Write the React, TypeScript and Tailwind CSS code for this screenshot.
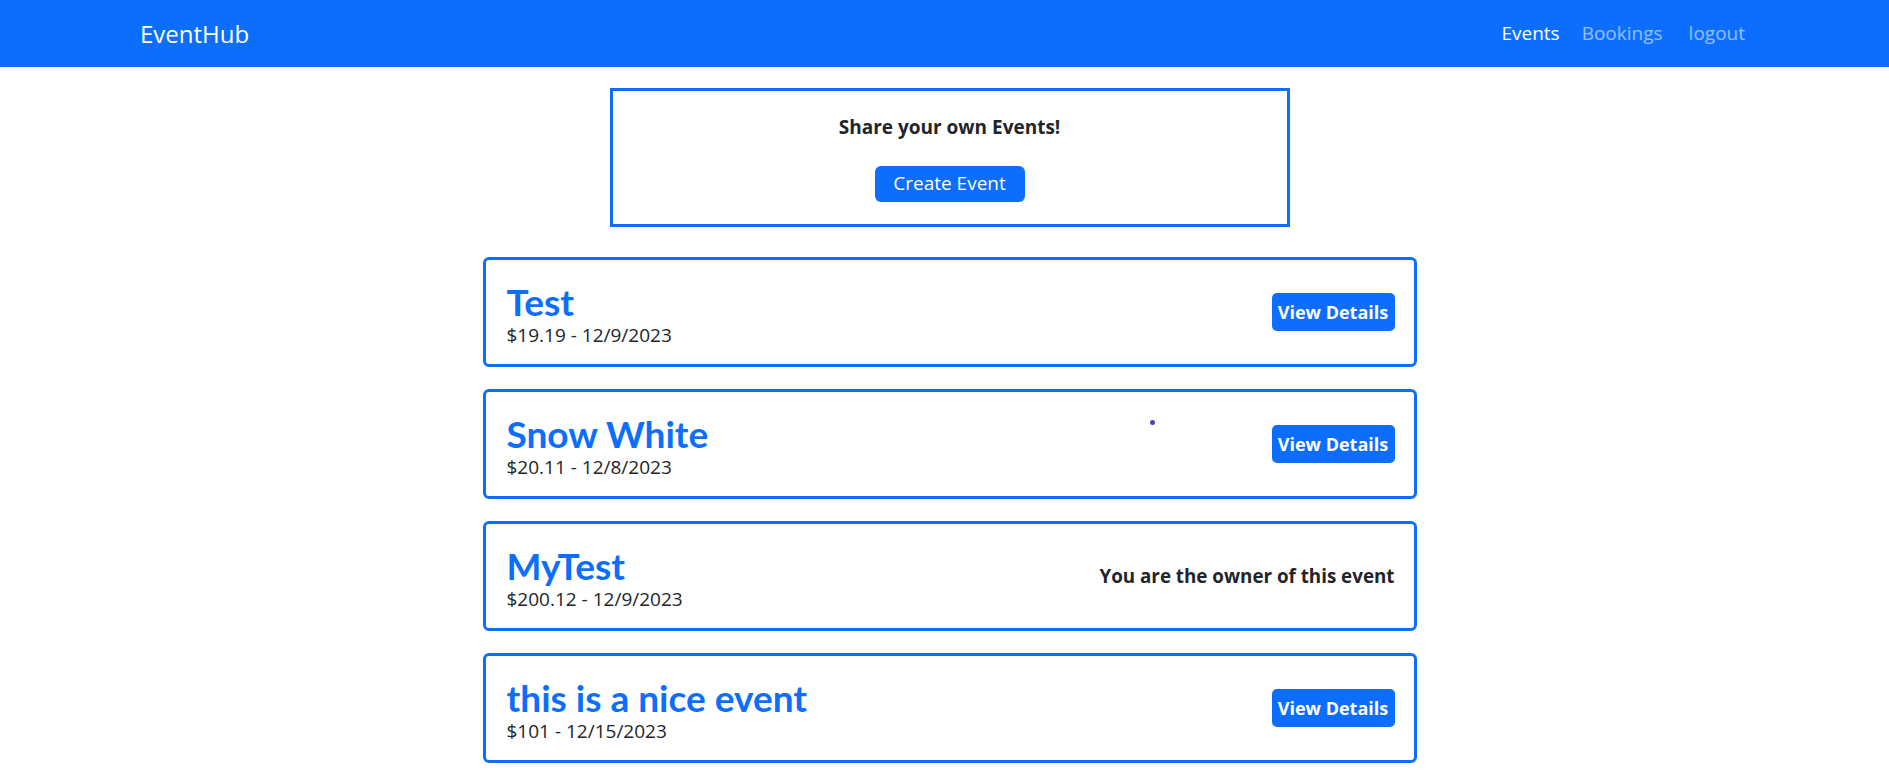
import React from 'react';

type EventItem = {
  title: string;
  price: string;
  date: string;
  owner?: boolean;
};

const events: EventItem[] = [
  { title: 'Test', price: '$19.19', date: '12/9/2023' },
  { title: 'Snow White', price: '$20.11', date: '12/8/2023' },
  { title: 'MyTest', price: '$200.12', date: '12/9/2023', owner: true },
  { title: 'this is a nice event', price: '$101', date: '12/15/2023' },
];

function EventCard({ item }: { item: EventItem }) {
  return (
    <li className="flex h-[110px] w-[934px] items-center justify-between rounded-[6px] border-[3px] border-[#0d6efd] pl-[21px] pr-[19px]">
      <div className="pt-[3px]">
        <h2 className="font-['Lato',sans-serif] text-[37px] font-bold leading-[44px] text-[#0d6efd]">
          {item.title}
        </h2>
        <p className="text-[19px] leading-[23px] text-[#212529]">
          {item.price} - {item.date}
        </p>
      </div>
      {item.owner ? (
        <p className="text-[18.8px] font-bold text-[#212529]">You are the owner of this event</p>
      ) : (
        <button className="h-[38px] w-[123px] rounded-[5px] bg-[#0d6efd] text-[18px] font-bold text-white">
          View Details
        </button>
      )}
    </li>
  );
}

export default function App() {
  return (
    <div className="relative min-h-screen bg-white font-['Open_Sans',sans-serif]">
      <nav className="flex h-[67px] items-center justify-between bg-[#0d6efd] pl-[140px] pr-[144px]">
        <a href="#" className="text-[24px] text-white">
          EventHub
        </a>
        <ul className="flex items-center text-[19px]">
          <li className="text-white">Events</li>
          <li className="ml-[22px] text-white/55">Bookings</li>
          <li className="ml-[26px] text-white/55">logout</li>
        </ul>
      </nav>

      <main className="flex flex-col items-center pl-[10px]">
        <div className="mt-[21px] flex h-[139px] w-[680px] flex-col items-center border-[3px] border-[#0d6efd] pt-[22px]">
          <p className="text-[19px] font-bold text-[#212529]">Share your own Events!</p>
          <button className="mt-[24px] h-[36px] w-[150px] rounded-[6px] bg-[#0d6efd] text-[19px] text-white">
            Create Event
          </button>
        </div>

        <ul className="mt-[30px] flex flex-col gap-[22px]">
          {events.map((e) => (
            <EventCard key={e.title} item={e} />
          ))}
        </ul>
      </main>

      <span className="absolute left-[1150px] top-[420px] h-[5px] w-[5px] rounded-full bg-[#4a3fc4]" />
    </div>
  );
}
